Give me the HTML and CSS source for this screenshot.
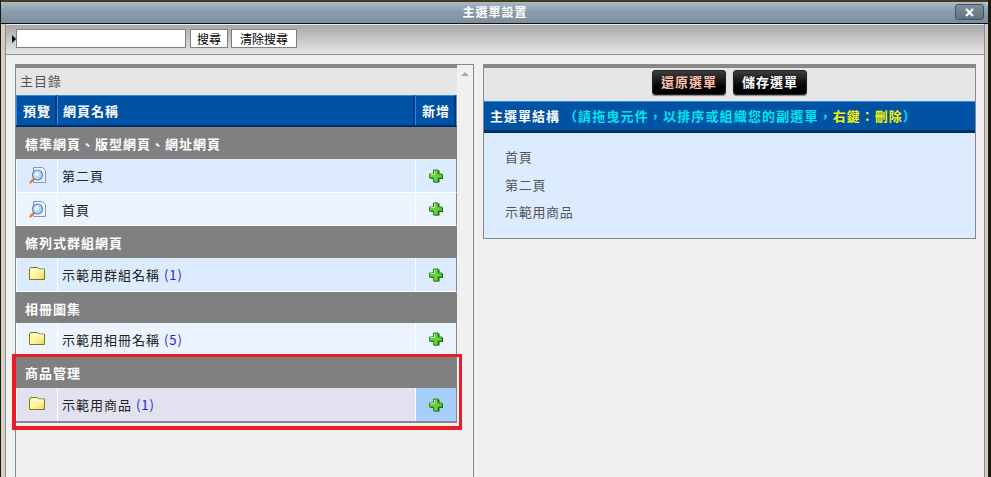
FILE: index.html
```html
<!DOCTYPE html>
<html lang="zh-Hant">
<head>
<meta charset="utf-8">
<title>主選單設置</title>
<link rel="stylesheet" href="styles.css">
</head>
<body>
<svg class="defs" width="0" height="0" aria-hidden="true">
  <symbol id="zoom" viewBox="0 0 17 17">
    <path d="M4.5.5h9l3 3v12h-12z" fill="#eef2fb" stroke="#8494c8"/>
    <circle cx="8.5" cy="8" r="5" fill="#a8dcf8" stroke="#6884b8" stroke-width="1.2"/>
    <circle cx="7.8" cy="7.2" r="2.2" fill="#e4f6ff"/>
    <path d="M4.8 11.8 1.4 15.4" stroke="#e8772a" stroke-width="2.2" stroke-linecap="round"/>
  </symbol>
  <symbol id="folder" viewBox="0 0 16 13">
    <defs>
      <linearGradient id="folderFill" x1="0" y1="0" x2="1" y2="1">
        <stop offset="0" stop-color="#fffbb8"/>
        <stop offset=".6" stop-color="#fff29a"/>
        <stop offset="1" stop-color="#f0c868"/>
      </linearGradient>
    </defs>
    <path d="M.5 12.5V2l1-1.5h7L10 2h5.500v10.500z" fill="url(#folderFill)" stroke="#7f7a18"/>
    <path d="M1 3h14" stroke="#fffde8"/>
  </symbol>
  <symbol id="plus" viewBox="0 0 14 14">
    <path d="M5.500 1.500h5v4h3.500v4.500h-3.500v3.500h-5v-3.500h-4v-4.500h4z" fill="#1d5c12"/>
    <path d="M4.500 1h4.500v4h4v4h-4v4H4.500V9h-4V5h4z" fill="#66d23e" stroke="#2c8a1c"/>
    <path d="M5.500 5.500V2M1.500 5.500h4" fill="none" stroke="#bdf298"/>
  </symbol>
</svg>
<div class="window">
  <header class="titlebar">
    <span class="title">主選單設置</span>
    <button class="close" aria-label="關閉"><svg width="9" height="9" viewBox="0 0 9 9"><path d="M1 1l7 7M8 1 1 8" stroke="#fff" stroke-width="2.2"/></svg></button>
  </header>
  <div class="frame">
    <div class="toolbar">
      <span class="marker"></span>
      <input class="search" type="text">
      <button class="tool-btn">搜尋</button>
      <button class="tool-btn wide">清除搜尋</button>
    </div>
    <div class="content">
      <section class="tree">
        <div class="tree-main">
          <div class="tree-caption">主目錄</div>
          <div class="head-row">
            <div class="head-cell h-prev">預覽</div>
            <div class="head-cell h-name">網頁名稱</div>
            <div class="head-cell h-add">新增</div>
          </div>
          <div class="group">標準網頁、版型網頁、網址網頁</div>
          <div class="row odd">
            <div class="c-prev"><svg class="ic-zoom"><use href="#zoom"/></svg></div>
            <div class="c-name">第二頁</div>
            <div class="c-add"><svg class="ic-plus"><use href="#plus"/></svg></div>
          </div>
          <div class="row even short">
            <div class="c-prev"><svg class="ic-zoom"><use href="#zoom"/></svg></div>
            <div class="c-name">首頁</div>
            <div class="c-add"><svg class="ic-plus"><use href="#plus"/></svg></div>
          </div>
          <div class="group">條列式群組網頁</div>
          <div class="row odd">
            <div class="c-prev"><svg class="ic-folder"><use href="#folder"/></svg></div>
            <div class="c-name">示範用群組名稱 <span class="count">(1)</span></div>
            <div class="c-add"><svg class="ic-plus"><use href="#plus"/></svg></div>
          </div>
          <div class="group slim">相冊圖集</div>
          <div class="row even short">
            <div class="c-prev"><svg class="ic-folder"><use href="#folder"/></svg></div>
            <div class="c-name">示範用相冊名稱 <span class="count">(5)</span></div>
            <div class="c-add"><svg class="ic-plus"><use href="#plus"/></svg></div>
          </div>
          <div class="group">商品管理</div>
          <div class="row hover">
            <div class="c-prev"><svg class="ic-folder"><use href="#folder"/></svg></div>
            <div class="c-name">示範用商品 <span class="count">(1)</span></div>
            <div class="c-add"><svg class="ic-plus"><use href="#plus"/></svg></div>
          </div>
        </div>
        <div class="scrollbar"><span class="arrow"></span></div>
        <div class="highlight"></div>
      </section>
      <section class="menu">
        <div class="menu-actions">
          <button class="dark-btn restore">還原選單</button>
          <button class="dark-btn">儲存選單</button>
        </div>
        <div class="menu-head">主選單結構 <span class="hint">（請拖曳元件，以排序或組織您的副選單，</span><span class="warn">右鍵：刪除</span><span class="hint">）</span></div>
        <ul class="menu-list">
          <li>首頁</li>
          <li>第二頁</li>
          <li>示範用商品</li>
        </ul>
      </section>
    </div>
  </div>
</div>
</body>
</html>
```
FILE: styles.css
```css
* { box-sizing: border-box; }
html, body { margin: 0; height: 100%; overflow: hidden; }
body {
  background: #1c1a10;
  font-family: "Noto Sans CJK TC", "Liberation Sans", sans-serif;
  font-size: 13px;
}
.defs { position: absolute; }
.window {
  height: 477px;
  margin: 0 3px 0 1px;
  border-top: 2px solid #453c22;
  display: flex;
  flex-direction: column;
  background: #d6cdc6;
}
.titlebar {
  height: 22px;
  flex: none;
  position: relative;
  display: flex;
  align-items: center;
  justify-content: center;
  padding: 0 0 3px 1px;
  background: linear-gradient(#a9b8c4, #8a9cab 45%, #7d8f9e);
  border-bottom: 1px solid #101010;
  border-radius: 4px 5px 0 0;
}
.title { color: #fff; font-size: 12px; font-weight: 700; letter-spacing: 1px; }
.close {
  position: absolute;
  right: 4px;
  top: 2px;
  width: 29px;
  height: 16px;
  padding: 0;
  display: flex;
  align-items: center;
  justify-content: center;
  background: linear-gradient(#7f909f, #5f7280);
  border: 1px solid #46545f;
  border-radius: 3px;
}
.frame {
  flex: 1;
  background: #f0f0f0;
  margin: 0 3px 0 4px;
  border-left: 1px solid #8a8a8a;
  border-right: 1px solid #8a8a8a;
}
.toolbar {
  height: 31px;
  display: flex;
  align-items: center;
  gap: 3px;
  padding: 0 0 2px 6px;
  background: linear-gradient(#a8a8a8, #e6e6e6);
  border-top: 1px solid #eee;
  border-bottom: 1px solid #8f8f8f;
}
.marker {
  width: 0;
  height: 0;
  border: 4px solid transparent;
  border-left: 4px solid #000;
  border-right: 0;
  margin-right: -3px;
}
.search { width: 170px; height: 19px; margin: 0 1px 0 0; background: #fff; border: 1px solid #808080; padding: 0; }
.tool-btn {
  height: 19px;
  padding: 0 6px;
  background: #fff;
  border: 1px solid #808080;
  color: #000;
  font: 12px "Noto Sans CJK TC", sans-serif;
}
.wide { padding: 0 8px; }
.content { display: flex; align-items: flex-start; padding: 9px 0 0 9px; }
.tree { display: flex; position: relative; width: 459px; height: 420px; flex: none; }
.tree-main { width: 442px; border-left: 1px solid #888; border-top: 4px solid #888; flex: none; height: 100%; }
.tree-caption { height: 27px; line-height: 25px; background: #e6e6e6; color: #555; padding-left: 4px; letter-spacing: 1px; }
.head-row {
  height: 32px;
  display: flex;
  border-right: 1px solid #888;
  background: #0052a4;
  border-bottom: 2px solid #00306a;
  color: #fff;
  font-weight: 700;
}
.head-cell {
  border-top: 1px solid #2f8ce8;
  border-left: 1px solid #2f8ce8;
  border-right: 2px solid #003a80;
  line-height: 29px;
  letter-spacing: 1px;
}
.h-prev { width: 41px; padding-left: 6px; }
.h-name { flex: 1; padding-left: 5px; }
.h-add { width: 41px; padding-left: 6px; }
.group {
  height: 32px;
  line-height: 33px;
  background: #808080;
  color: #fff;
  font-weight: 700;
  padding-left: 9px;
  letter-spacing: 1px;
}
.slim { height: 31px; line-height: 33px; }
.row { height: 34px; display: flex; color: #222; border-bottom: 1px solid #fff; border-right: 1px solid #888; }
.short { height: 33px; }
.c-prev {
  width: 42px;
  flex: none;
  display: flex;
  align-items: center;
  justify-content: center;
  border-left: 1px solid #fff;
  border-right: 1px solid #fff;
}
.c-name {
  flex: 1;
  padding-left: 4px;
  line-height: 33px;
  letter-spacing: 1px;
  border-right: 1px solid #fff;
}
.c-add { width: 40px; flex: none; display: flex; align-items: center; justify-content: center; }
.odd { background: #dcebfe; }
.even { background: #ebf3fe; }
.hover { background: #e1e1f0; height: 35px; border-bottom: 2px solid #888; }
.hover .c-add { background: #a6d0fa; }
.count { color: #2a1fd6; }
.ic-zoom { width: 17px; height: 17px; }
.ic-folder { width: 16px; height: 13px; margin-top: -2px; }
.ic-plus { width: 14px; height: 14px; }
.scrollbar {
  flex: 1;
  border: 1px solid #888;
  border-width: 1px 1px 0 0;
  background: #f0f0f0;
  display: flex;
  justify-content: center;
  padding-top: 7px;
  height: 100%;
}
.arrow { width: 0; height: 0; border: 4px solid transparent; border-top: 0; border-bottom: 4px solid #a8a8a8; }
.highlight {
  position: absolute;
  left: -3px;
  top: 290px;
  width: 450px;
  height: 76px;
  border: solid #ed1c24;
  border-width: 3px 3px 4px 4px;
}
.menu { width: 493px; margin-left: 9px; flex: none; border: 1px solid #888; border-top-width: 4px; background: #dcebfe; }
.menu-actions {
  height: 33px;
  display: flex;
  justify-content: center;
  gap: 7px;
  align-items: flex-start;
  background: #e6e6e6;
  padding-top: 2px;
}
.dark-btn {
  width: 74px;
  height: 25px;
  padding: 0 0 2px;
  background: linear-gradient(#3c3c3c, #000 70%);
  border: 1px solid #222;
  border-radius: 3px;
  box-shadow: 0 1px 1px #888;
  color: #fff;
  font: 700 13px "Noto Sans CJK TC", sans-serif;
  letter-spacing: 1px;
}
.restore { color: #ffc0ac; }
.menu-head {
  height: 32px;
  line-height: 27px;
  background: #0052a4;
  border-top: 1px solid #2f8ce8;
  border-bottom: 3px solid #00306a;
  color: #fff;
  font-weight: 700;
  padding-left: 6px;
  letter-spacing: 1px;
  white-space: nowrap;
}
.hint { color: #00e6f0; letter-spacing: 1.15px; }
.warn { color: #f5f500; }
.menu-list { list-style: none; margin: 0; padding: 10px 0 12px 21px; color: #555; }
.menu-list li { height: 27.5px; line-height: 27.5px; letter-spacing: .7px; }
```
